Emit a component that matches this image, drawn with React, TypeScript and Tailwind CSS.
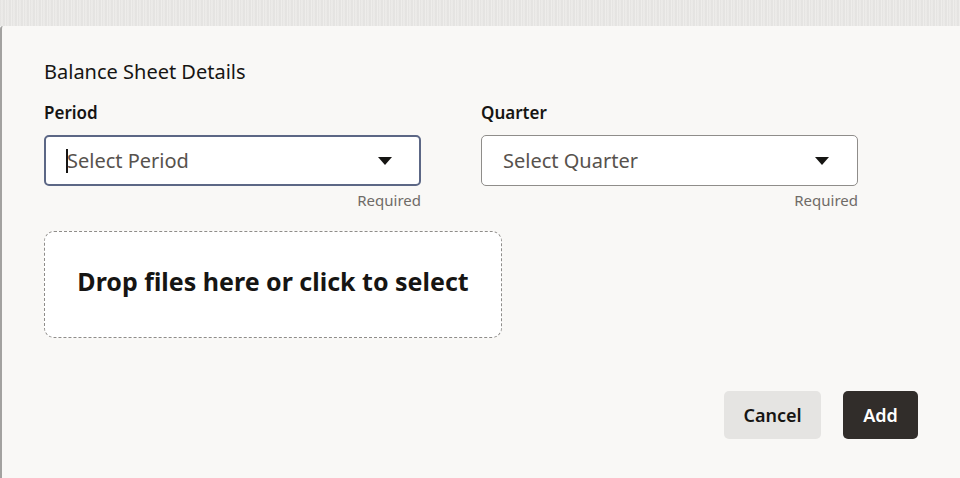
function Caret() {
  return (
    <svg width="14" height="8" viewBox="0 0 14 8" className="shrink-0">
      <path d="M0 0 L14 0 L7 8 Z" fill="#161513" />
    </svg>
  );
}

type SelectProps = {
  label: string;
  placeholder: string;
  focused?: boolean;
};

function SelectField({ label, placeholder, focused }: SelectProps) {
  return (
    <div className="w-[377px] flex flex-col">
      <div className="text-[17px] font-semibold text-[#161513] leading-[22px] mb-[11px]">{label}</div>
      <div
        className={
          focused
            ? "h-[51px] rounded-[5px] border-2 border-[#5c6785] bg-white flex items-center pl-[20px] pr-[27px]"
            : "h-[51px] rounded-[5px] border border-[#8f8d8a] bg-white flex items-center pl-[21px] pr-[28px]"
        }
      >
        {focused && <span className="w-[2px] h-[24px] bg-[#161513] -mr-[1px]" />}
        <span className="flex-1 text-[20px] text-[#57524d]">{placeholder}</span>
        <Caret />
      </div>
      <div className="text-right text-[15px] text-[#6f6b67] mt-[4px] leading-[20px]">Required</div>
    </div>
  );
}

export default function App() {
  return (
    <div className="w-[960px] h-[478px] flex flex-col overflow-hidden" style={{ fontFamily: '"Noto Sans", "Open Sans", sans-serif' }}>
      <div className="h-[26px] bg-[repeating-linear-gradient(90deg,#e3e2e0_0px,#eeedeb_2px,#e1e0de_4px,#f2f1ef_6px)]" />
      <div className="flex-1 bg-[#f9f8f6] border-l-2 border-[#a3a2a0] rounded-tl-[3px] pl-[42px] pr-[42px] pt-[34px] flex flex-col">
        <div className="text-[20px] text-[#161513] leading-[24px] mb-[18px]">Balance Sheet Details</div>
        <div className="flex gap-[60px]">
          <SelectField label="Period" placeholder="Select Period" focused />
          <SelectField label="Quarter" placeholder="Select Quarter" />
        </div>
        <div className="mt-[21px] w-[458px] h-[107px] rounded-[10px] border border-dashed border-[#8f8d8a] bg-white flex items-center justify-center pb-[5px]">
          <span className="text-[25px] font-bold text-[#161513]">Drop files here or click to select</span>
        </div>
        <div className="flex justify-end gap-[22px] mt-[53px]">
          <button className="h-[48px] w-[97px] rounded-[5px] bg-[#e5e4e2] text-[18px] font-semibold text-[#161513]">Cancel</button>
          <button className="h-[48px] w-[75px] rounded-[5px] bg-[#312d2a] text-[18px] font-semibold text-white">Add</button>
        </div>
      </div>
    </div>
  );
}
